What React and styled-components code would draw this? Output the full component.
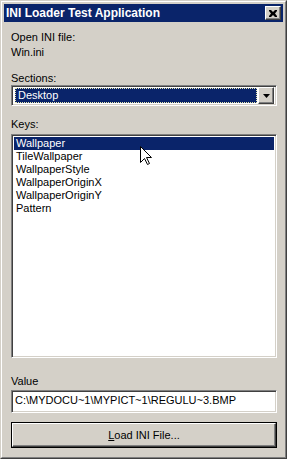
import React from "react";
import styled, { createGlobalStyle } from "styled-components";

const Global = createGlobalStyle`
  html, body { margin: 0; padding: 0; background: #D4D0C8; }
  * { box-sizing: border-box; }
`;

const FONT = `"Liberation Sans", Arial, sans-serif`;

const Frame = styled.div`
  width: 287px;
  height: 459px;
  border: 1px solid;
  border-color: #D4D0C8 #404040 #404040 #D4D0C8;
  background: #D4D0C8;
  font-family: ${FONT};
  font-size: 11px;
  color: #000;
`;

const FrameInner = styled.div`
  height: 100%;
  border: 1px solid;
  border-color: #FFFFFF #808080 #808080 #FFFFFF;
  padding: 2px;
  display: flex;
  flex-direction: column;
`;

const TitleBar = styled.div`
  height: 18px;
  background: #0A246A;
  display: flex;
  align-items: center;
  padding: 0 2px 0 2px;
`;

const TitleText = styled.div`
  flex: 1;
  color: #fff;
  font-weight: bold;
  font-size: 12px;
  line-height: 18px;
  white-space: nowrap;
`;

const Raised = styled.div`
  background: #D4D0C8;
  border: 1px solid;
  border-color: #FFFFFF #404040 #404040 #FFFFFF;
  box-shadow: inset -1px -1px #808080;
  display: flex;
  align-items: center;
  justify-content: center;
`;

const CloseBtn = styled(Raised)`
  width: 16px;
  height: 14px;
`;

const Client = styled.div`
  flex: 1;
  display: flex;
  flex-direction: column;
  padding: 9px 6px 0 7px;
`;

const Label = styled.div`
  line-height: 13px;
  height: 13px;
  margin-top: ${(p) => p.$mt || 0}px;
  white-space: nowrap;
`;

const Sunken = styled.div`
  background: #fff;
  border: 1px solid;
  border-color: #808080 #FFFFFF #FFFFFF #808080;
  box-shadow: inset 1px 1px #404040, inset -1px -1px #D4D0C8;
  margin-top: ${(p) => p.$mt || 0}px;
`;

const Combo = styled(Sunken)`
  height: 21px;
  display: flex;
  align-items: center;
  padding: 2px;
`;

const ComboValue = styled.div`
  flex: 1;
  height: 15px;
  margin-left: 1px;
  margin-right: 1px;
  background: #0A246A;
  color: #fff;
  line-height: 13px;
  padding-left: 2px;
  border: 1px dotted #e8e8b0;
`;

const DropBtn = styled(Raised)`
  width: 16px;
  height: 17px;
`;

const List = styled(Sunken)`
  position: relative;
  height: 224px;
  padding: 2px;
`;

const Item = styled.div`
  height: 13px;
  line-height: 13px;
  padding-left: 2px;
  background: ${(p) => (p.$sel ? "#0A246A" : "transparent")};
  color: ${(p) => (p.$sel ? "#fff" : "#000")};
`;

const Pointer = styled.svg`
  position: absolute;
  left: 128px;
  top: 11px;
`;

const TextBox = styled(Sunken)`
  height: 23px;
  padding: 0 3px;
  line-height: 19px;
  white-space: nowrap;
  overflow: hidden;
`;

const Button = styled.div`
  margin-top: 9px;
  height: 26px;
  border: 1px solid #000;
  display: flex;
`;

const ButtonFace = styled(Raised)`
  flex: 1;
  border-color: #FFFFFF #404040 #404040 #FFFFFF;
`;

const U = styled.span`
  text-decoration: underline;
`;

const keys = [
  "Wallpaper",
  "TileWallpaper",
  "WallpaperStyle",
  "WallpaperOriginX",
  "WallpaperOriginY",
  "Pattern",
];

export default function App() {
  return (
    <>
      <Global />
      <Frame>
        <FrameInner>
          <TitleBar>
            <TitleText>INI Loader Test Application</TitleText>
            <CloseBtn>
              <svg width="8" height="7" viewBox="0 0 8 7">
                <path d="M0 0h2l2 2 2-2h2v1L6 3.5 8 6v1H6L4 5 2 7H0V6l2-2.5L0 1z" fill="#000" />
              </svg>
            </CloseBtn>
          </TitleBar>
          <Client>
            <Label>Open INI file:</Label>
            <Label $mt={2}>Win.ini</Label>
            <Label $mt={13}>Sections:</Label>
            <Combo>
              <ComboValue>Desktop</ComboValue>
              <DropBtn>
                <svg width="7" height="4" viewBox="0 0 7 4">
                  <path d="M0 0h7L3.5 4z" fill="#000" />
                </svg>
              </DropBtn>
            </Combo>
            <Label $mt={12}>Keys:</Label>
            <List $mt={3}>
              {keys.map((k, i) => (
                <Item key={k} $sel={i === 0}>
                  {k}
                </Item>
              ))}
              <Pointer width="12" height="20" viewBox="0 0 12 20">
                <path
                  d="M0.5 0.5 V16.5 L4.5 12.5 L7.5 18.5 L9.5 17.5 L6.5 11.5 H11.5 Z"
                  fill="#fff"
                  stroke="#000"
                  strokeWidth="1"
                />
              </Pointer>
            </List>
            <Label $mt={17}>Value</Label>
            <TextBox $mt={2}>C:\MYDOCU~1\MYPICT~1\REGULU~3.BMP</TextBox>
            <Button>
              <ButtonFace>
                <span>
                  <U>L</U>oad INI File...
                </span>
              </ButtonFace>
            </Button>
          </Client>
        </FrameInner>
      </Frame>
    </>
  );
}
